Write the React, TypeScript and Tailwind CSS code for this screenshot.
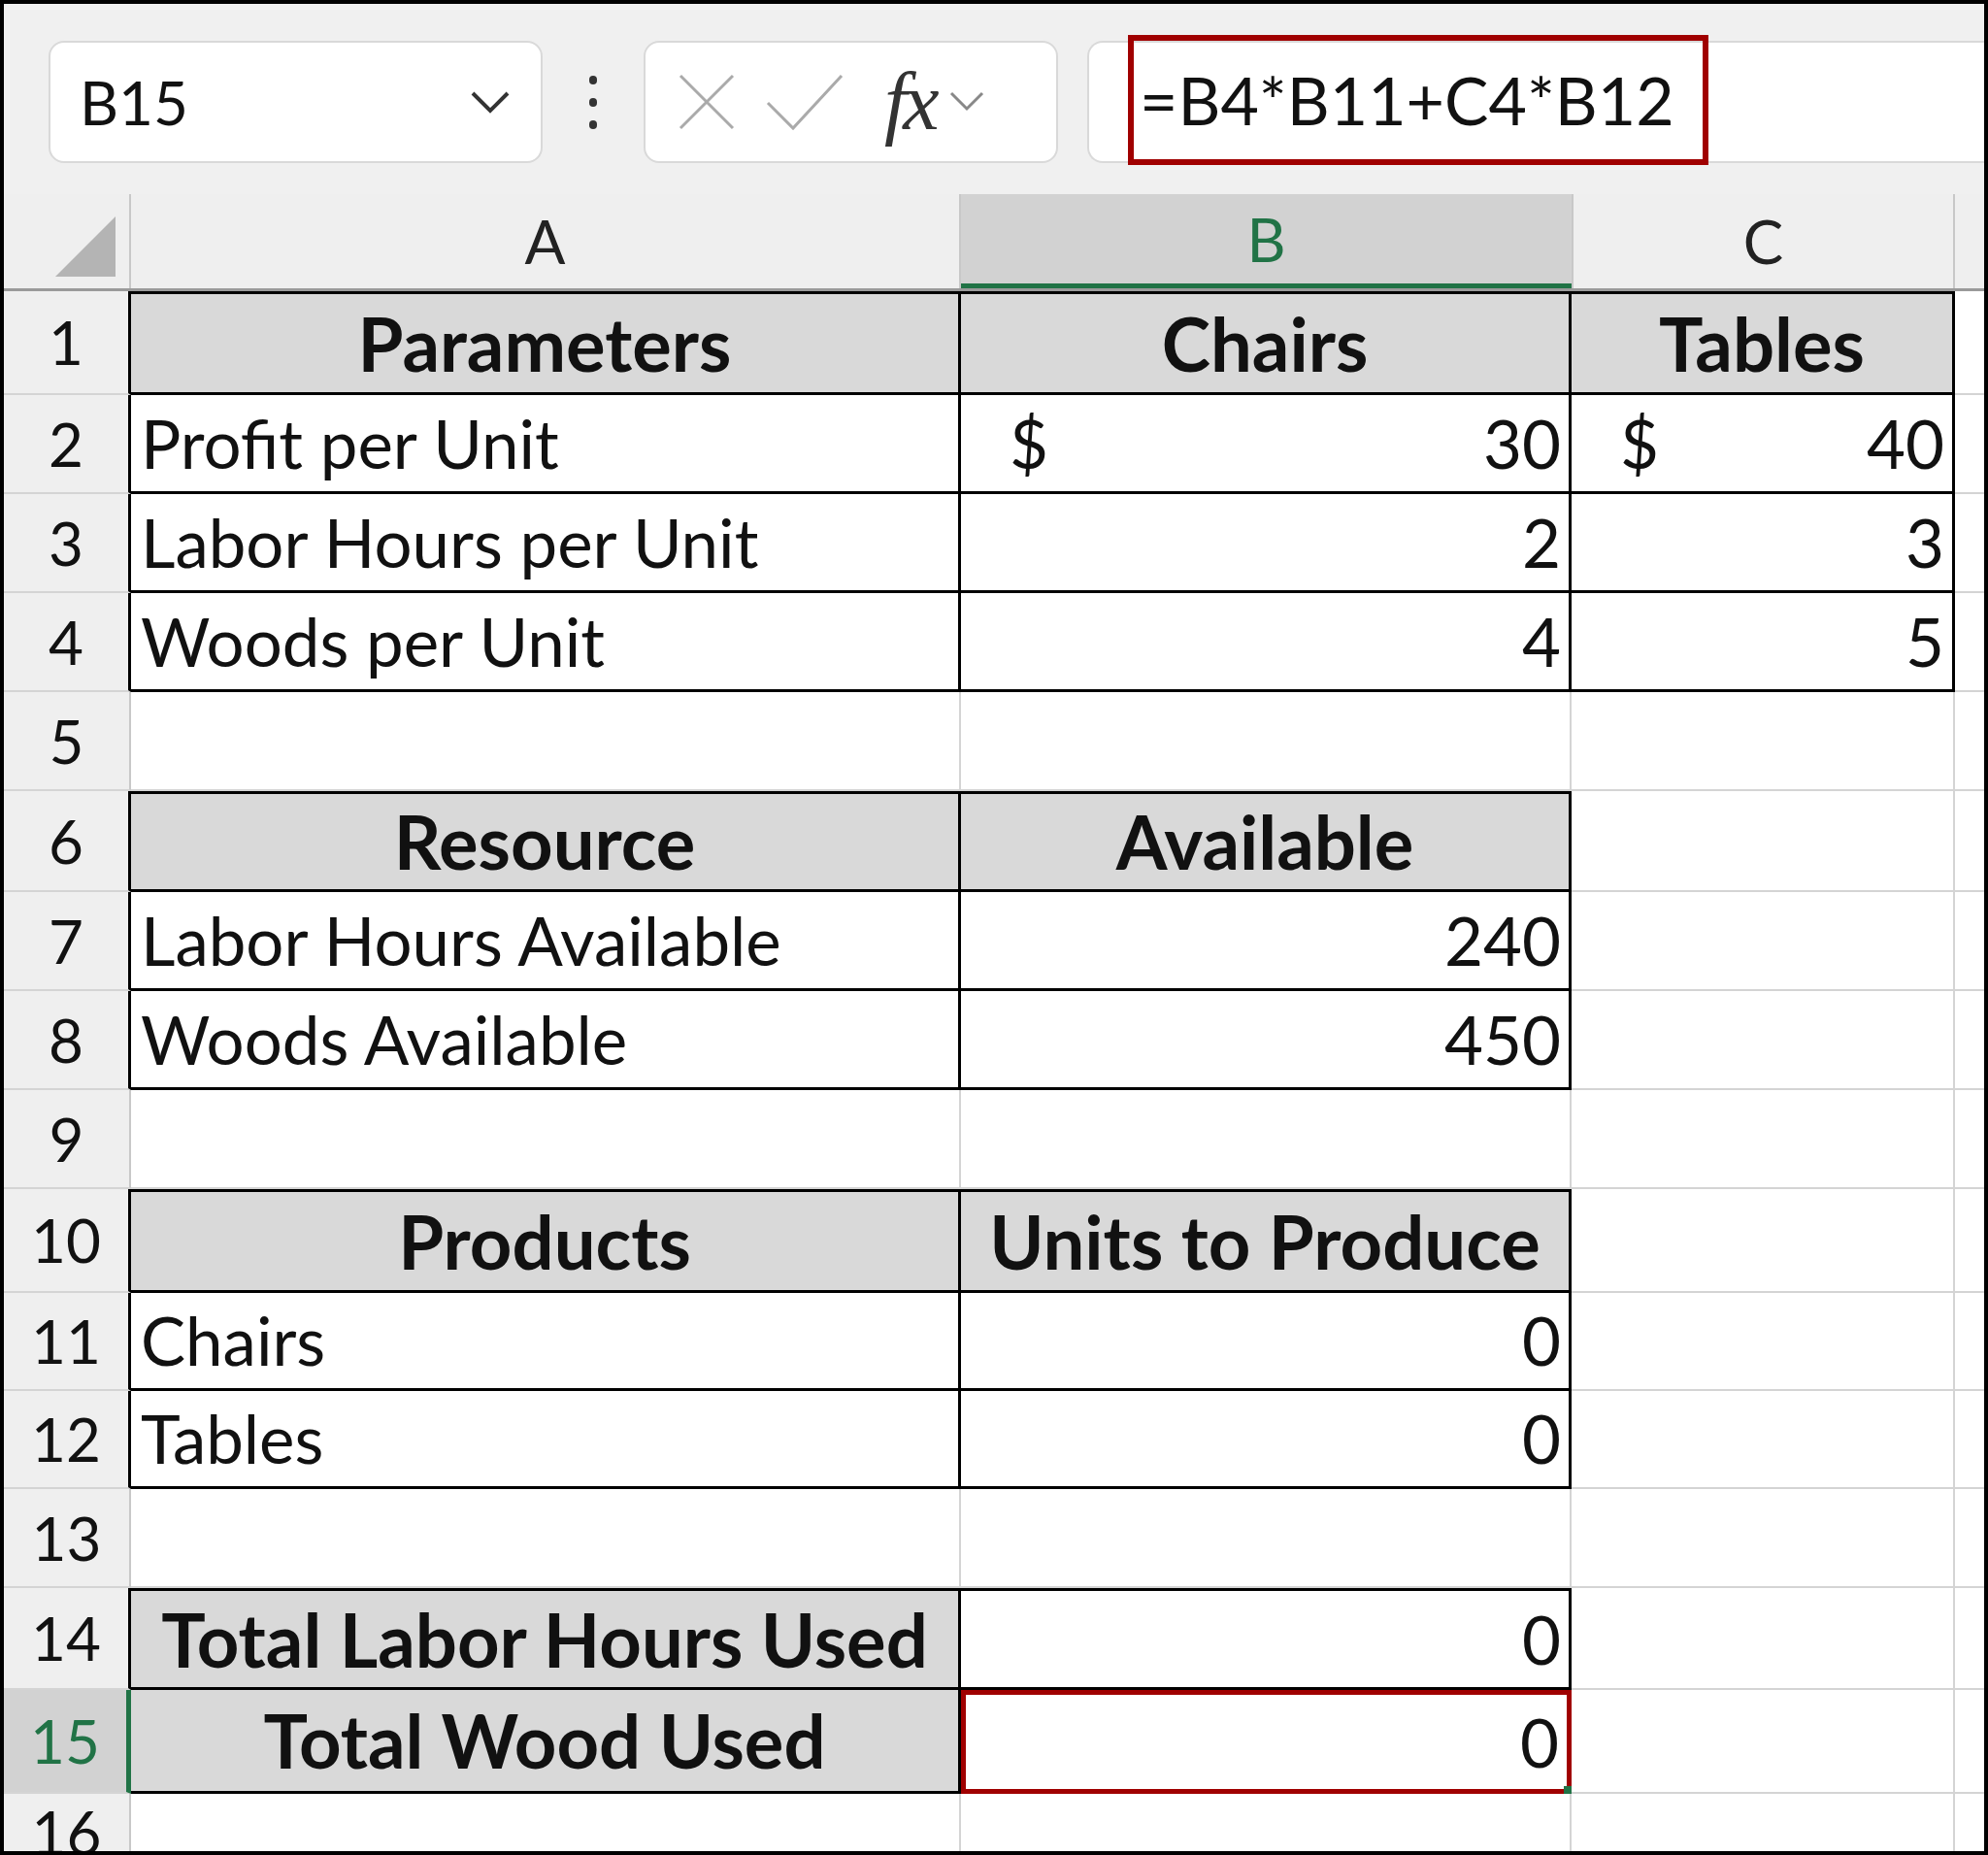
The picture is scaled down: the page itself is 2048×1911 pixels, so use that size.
import React from "react";

type Cell = { t?: string; al?: "l" | "c" | "r"; b?: boolean; fill?: boolean; tb?: boolean; top?: boolean; dollar?: boolean };
type Row = { n: number; h: number; c: Cell[] };

const T = (t: string, o: Partial<Cell> = {}): Cell => ({ t, tb: true, ...o });
const E: Cell = {};

const rows: Row[] = [
  { n: 1, h: 107, c: [T("Parameters", { b: true, fill: true, al: "c", top: true }), T("Chairs", { b: true, fill: true, al: "c", top: true }), T("Tables", { b: true, fill: true, al: "c", top: true })] },
  { n: 2, h: 102, c: [T("Profit per Unit"), T("30", { al: "r", dollar: true }), T("40", { al: "r", dollar: true })] },
  { n: 3, h: 102, c: [T("Labor Hours per Unit"), T("2", { al: "r" }), T("3", { al: "r" })] },
  { n: 4, h: 102, c: [T("Woods per Unit"), T("4", { al: "r" }), T("5", { al: "r" })] },
  { n: 5, h: 102, c: [E, E, E] },
  { n: 6, h: 104, c: [T("Resource", { b: true, fill: true, al: "c", top: true }), T("Available", { b: true, fill: true, al: "c", top: true }), E] },
  { n: 7, h: 102, c: [T("Labor Hours Available"), T("240", { al: "r" }), E] },
  { n: 8, h: 102, c: [T("Woods Available"), T("450", { al: "r" }), E] },
  { n: 9, h: 102, c: [E, E, E] },
  { n: 10, h: 107, c: [T("Products", { b: true, fill: true, al: "c", top: true }), T("Units to Produce", { b: true, fill: true, al: "c", top: true }), E] },
  { n: 11, h: 101, c: [T("Chairs"), T("0", { al: "r" }), E] },
  { n: 12, h: 101, c: [T("Tables"), T("0", { al: "r" }), E] },
  { n: 13, h: 102, c: [E, E, E] },
  { n: 14, h: 105, c: [T("Total Labor Hours Used", { b: true, fill: true, al: "c", top: true }), T("0", { al: "r", top: true }), E] },
  { n: 15, h: 107, c: [T("Total Wood Used", { b: true, fill: true, al: "c" }), T("0", { al: "r" }), E] },
  { n: 16, h: 80, c: [E, E, E] },
];

const widths = ["w-[855px]", "w-[629px]", "w-[395px]"];
const font = { fontFamily: "Lato, 'Open Sans', sans-serif" };

export default function App() {
  return (
    <div className="w-[2048px] h-[1911px] overflow-hidden border-[4px] border-black bg-white text-[#111]" style={font}>
      <div className="h-[196px] bg-[#f0f0f0] flex items-start pt-[34px] pl-[46px]">
        <div className="w-[509px] h-[126px] mt-[4px] bg-white border-2 border-[#d9d9d9] rounded-[16px] flex items-center pl-[30px] pr-[30px] justify-between">
          <span className="text-[62px]">B15</span>
          <svg width="44" height="30" viewBox="0 0 44 30"><path d="M4 6 L22 24 L40 6" fill="none" stroke="#333" strokeWidth="4" /></svg>
        </div>
        <div className="w-[104px] h-[126px] mt-[4px] flex flex-col items-center justify-center gap-[14px]">
          <div className="w-[8px] h-[9px] bg-[#333] rounded-sm" />
          <div className="w-[8px] h-[9px] bg-[#333] rounded-sm" />
          <div className="w-[8px] h-[9px] bg-[#333] rounded-sm" />
        </div>
        <div className="w-[427px] h-[126px] mt-[4px] bg-white border-2 border-[#d9d9d9] rounded-[16px] flex items-center pl-[30px] gap-[26px]">
          <svg width="66" height="66" viewBox="0 0 66 66"><path d="M6 6 L60 60 M60 6 L6 60" stroke="#aaa" strokeWidth="3" /></svg>
          <svg width="84" height="66" viewBox="0 0 84 66"><path d="M4 34 L30 60 L80 6" fill="none" stroke="#aaa" strokeWidth="3" /></svg>
          <span className="text-[84px] italic text-[#333] ml-[14px] leading-none tracking-[-4px]" style={{ fontFamily: "'Liberation Serif', serif" }}>fx</span>
          <svg width="40" height="30" viewBox="0 0 40 30" className="-ml-[14px]"><path d="M4 6 L20 22 L36 6" fill="none" stroke="#888" strokeWidth="3" /></svg>
        </div>
        <div className="flex-1 h-[126px] mt-[4px] ml-[30px] bg-white border-2 border-[#d9d9d9] border-r-0 rounded-l-[16px] flex items-center pl-[40px]">
          <div className="h-[134px] w-[598px] border-[6px] border-[#a00000] flex items-center pl-[6px] -mt-[4px]">
            <span className="text-[68px]">=B4*B11+C4*B12</span>
          </div>
        </div>
      </div>
      <div className="flex h-[100px] bg-[#efefef] border-b-[3px] border-[#9a9a9a]">
        <div className="w-[131px] flex items-end justify-end pr-[14px] pb-[12px] border-r-2 border-[#c8c8c8]">
          <svg width="62" height="62" viewBox="0 0 62 62"><path d="M62 0 L62 62 L0 62 Z" fill="#b4b4b4" /></svg>
        </div>
        <div className={`${widths[0]} flex items-center justify-center text-[62px] border-r-2 border-[#c8c8c8] text-[#222]`}>A</div>
        <div className={`${widths[1]} flex items-center justify-center text-[62px] bg-[#d2d2d2] text-[#217346] border-b-[5px] border-[#217346]`}>B</div>
        <div className={`${widths[2]} flex items-center justify-center text-[62px] border-x-2 border-[#c8c8c8] text-[#222]`}>C</div>
        <div className="flex-1" />
      </div>
      {rows.map((r) => {
        const aTable = !!r.c[0].tb;
        const sel = r.n === 15;
        return (
          <div key={r.n} className="flex" style={{ height: r.h }}>
            <div className={`w-[131px] flex items-center justify-center text-[62px] border-b-2 border-[#d4d4d4] ${sel ? "text-[#217346] bg-[#d2d2d2] border-r-[5px] border-r-[#217346]" : aTable ? "bg-[#efefef] border-r-[3px] border-r-black" : "bg-[#efefef] border-r-2 border-r-[#c8c8c8]"}`}>
              {r.n}
            </div>
            {r.c.map((c, i) => {
              const red = sel && i === 1;
              const base = `${widths[i]} relative flex items-center whitespace-nowrap overflow-visible ${c.b ? "text-[76px] font-bold" : "text-[69px]"}`;
              const bord = red
                ? "border-[5px] border-[#a00000]"
                : c.tb
                ? `border-r-[3px] border-b-[3px] border-black ${c.top ? "border-t-[3px]" : ""}`
                : "border-r-2 border-b-2 border-[#d4d4d4]";
              const al = c.al === "c" ? "justify-center" : c.al === "r" ? "justify-end pr-[8px]" : "justify-start pl-[10px]";
              return (
                <div key={i} className={`${base} ${bord} ${al} ${c.fill ? "bg-[#d9d9d9]" : "bg-white"}`}>
                  {c.dollar && <span className="absolute left-[50px]">$</span>}
                  {c.t}
                  {red && <div className="absolute -right-[9px] -bottom-[9px] w-[12px] h-[12px] bg-[#217346]" />}
                </div>
              );
            })}
            <div className="flex-1 border-b-2 border-[#d4d4d4]" />
          </div>
        );
      })}
    </div>
  );
}
